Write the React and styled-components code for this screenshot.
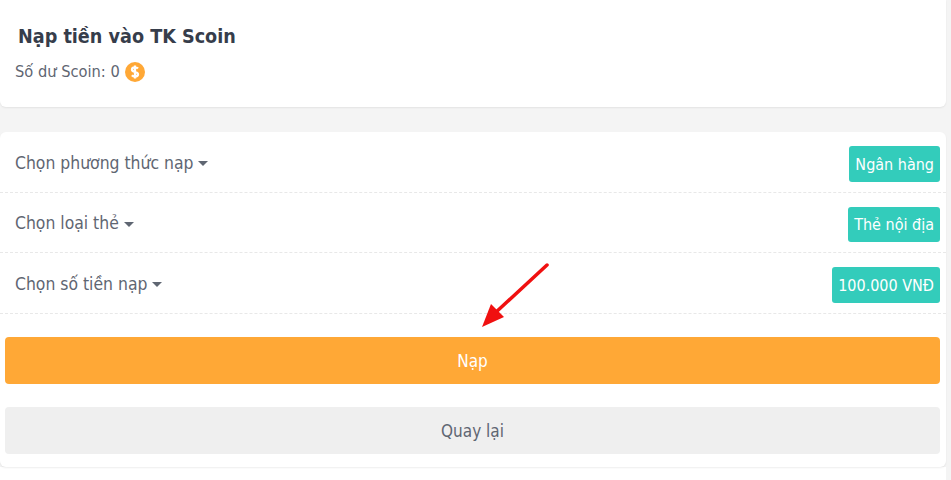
import React from 'react';
import styled, { createGlobalStyle } from 'styled-components';

const FONT = '"DejaVu Sans Condensed", "Noto Sans", sans-serif';

const Global = createGlobalStyle`
  html, body { margin: 0; padding: 0; height: 100%; background: #f4f4f4; overflow: hidden; }
  body { font-family: ${FONT}; color: #5f6672; }
`;
const Page = styled.div`
  width: 946px;
  display: flex;
  flex-direction: column;
`;
const Card = styled.section`
  background: #fff;
  border-radius: 0 0 6px 6px;
  box-shadow: 0 1px 2px rgba(0,0,0,.07);
`;
const Header = styled(Card)`
  height: 107px;
  box-sizing: border-box;
  padding: 23px 15px 0;
  margin-bottom: 25px;
`;
const Title = styled.h1`
  margin: 0 0 0 3px;
  font-size: 19.6px;
  line-height: 28px;
  font-weight: 700;
  color: #363d4b;
`;
const Balance = styled.div`
  display: flex;
  align-items: center;
  gap: 5px;
  margin-top: 9px;
  font-size: 16.3px;
  line-height: 24px;
`;
const Form = styled(Card)`
  position: relative;
  border-radius: 6px;
  padding-bottom: 13px;
`;
const Row = styled.div`
  height: ${p => p.$h}px;
  box-sizing: border-box;
  display: flex;
  align-items: center;
  justify-content: space-between;
  padding: 4px 6px 0 15px;
  border-bottom: 1px dashed #e8e8e8;
`;
const Label = styled.div`
  display: flex;
  align-items: center;
  gap: 5px;
  font-size: 17.4px;
  padding-bottom: 3px;
`;
const Caret = styled.span`
  width: 0;
  height: 0;
  margin-top: 2px;
  border-left: 5px solid transparent;
  border-right: 5px solid transparent;
  border-top: 5px solid #5f6672;
`;
const Tag = styled.span`
  height: ${p => p.$h}px;
  display: flex;
  align-items: center;
  padding: 0 6px 0 6px;
  background: #33ccbb;
  color: #fff;
  border-radius: 3px;
  font-size: 16px;
`;
const Actions = styled.div`
  display: flex;
  flex-direction: column;
  gap: 23px;
  padding: 23px 6px 0 5px;
`;
const Button = styled.button`
  height: 47px;
  border: 0;
  border-radius: 4px;
  font: 17px ${FONT};
  background: ${p => (p.$primary ? '#ffa836' : '#efefef')};
  color: ${p => (p.$primary ? '#fff' : '#5f6672')};
`;
const Footer = styled.div`
  height: 20px;
  background: #fff;
`;
const Arrow = styled.svg`
  position: absolute;
  left: 480px;
  top: 262px;
`;

const Coin = () => (
  <svg width="20" height="20" viewBox="0 0 20 20" aria-hidden="true">
    <circle cx="10" cy="10" r="10" fill="#ffa836" />
    <path d="M13 6.6C12.3 5.8 11.2 5.4 10 5.4c-1.8 0-3 .9-3 2.3 0 3 6 1.6 6 4.6 0 1.4-1.3 2.3-3 2.3-1.3 0-2.4-.5-3.1-1.3M10 3.6v12.8" fill="none" stroke="#fff" strokeWidth="2.3" />
  </svg>
);

const rows = [
  ['Chọn phương thức nạp', 'Ngân hàng', 61],
  ['Chọn loại thẻ', 'Thẻ nội địa', 60],
  ['Chọn số tiền nạp', '100.000 VNĐ', 61],
];

export default function App() {
  return (
    <Page>
      <Global />
      <Header>
        <Title>Nạp tiền vào TK Scoin</Title>
        <Balance>Số dư Scoin: 0 <Coin /></Balance>
      </Header>
      <Form>
        {rows.map(([label, value, h]) => (
          <Row key={label} $h={h}>
            <Label>{label} <Caret /></Label>
            <Tag $h={h - 25}>{value}</Tag>
          </Row>
        ))}
        <Actions>
          <Button $primary>Nạp</Button>
          <Button>Quay lại</Button>
        </Actions>
      </Form>
      <Footer />
      <Arrow width="72" height="68" viewBox="0 0 72 68">
        <path d="M67 3 L14 52" stroke="#f01010" strokeWidth="3.5" strokeLinecap="round" />
        <path d="M2 65 L11 42 L24 55 Z" fill="#f01010" />
      </Arrow>
    </Page>
  );
}
